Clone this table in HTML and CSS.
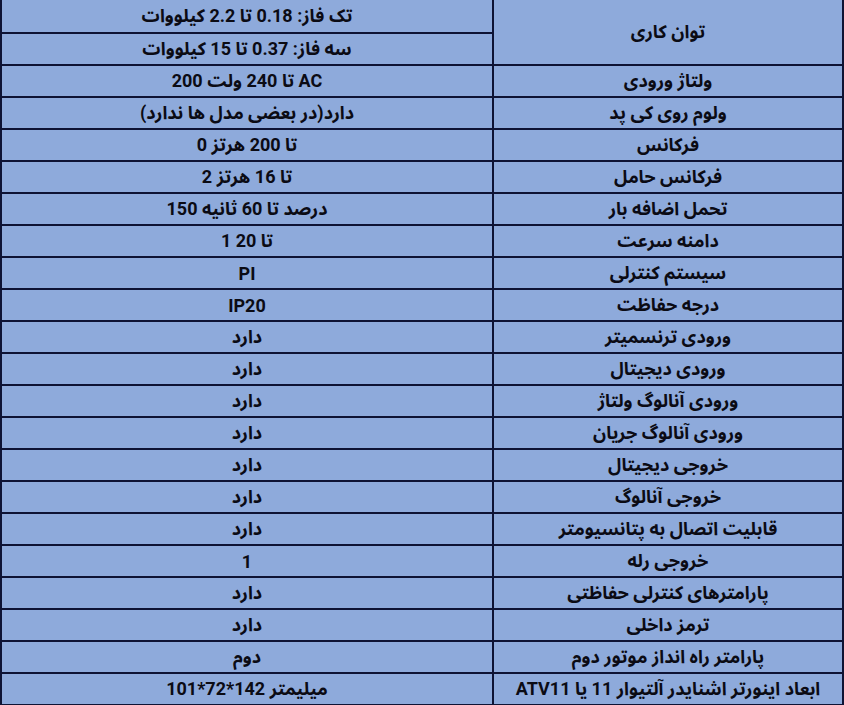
FILE: index.html
```html
<!DOCTYPE html>
<html lang="fa">
<head>
<meta charset="utf-8">
<title>مشخصات فنی اینورتر اشنایدر ATV11</title>
<link rel="stylesheet" href="styles.css">
</head>
<body>
<div class="spec">
  <div class="cell label span2">توان کاری</div>
  <div class="cell value">تک فاز: 0.18 تا 2.2 کیلووات</div>
  <div class="cell value">سه فاز: 0.37 تا 15 کیلووات</div>

  <div class="cell label">ولتاژ ورودی</div>
  <div class="cell value">200 تا 240 ولت AC</div>

  <div class="cell label">ولوم روی کی پد</div>
  <div class="cell value">دارد(در بعضی مدل ها ندارد)</div>

  <div class="cell label">فرکانس</div>
  <div class="cell value">0 تا 200 هرتز</div>

  <div class="cell label">فرکانس حامل</div>
  <div class="cell value">2 تا 16 هرتز</div>

  <div class="cell label">تحمل اضافه بار</div>
  <div class="cell value">150 درصد تا 60 ثانیه</div>

  <div class="cell label">دامنه سرعت</div>
  <div class="cell value">1 تا 20</div>

  <div class="cell label">سیستم کنترلی</div>
  <div class="cell value">PI</div>

  <div class="cell label">درجه حفاظت</div>
  <div class="cell value">IP20</div>

  <div class="cell label">ورودی ترنسمیتر</div>
  <div class="cell value">دارد</div>

  <div class="cell label">ورودی دیجیتال</div>
  <div class="cell value">دارد</div>

  <div class="cell label">ورودی آنالوگ ولتاژ</div>
  <div class="cell value">دارد</div>

  <div class="cell label">ورودی آنالوگ جریان</div>
  <div class="cell value">دارد</div>

  <div class="cell label">خروجی دیجیتال</div>
  <div class="cell value">دارد</div>

  <div class="cell label">خروجی آنالوگ</div>
  <div class="cell value">دارد</div>

  <div class="cell label">قابلیت اتصال به پتانسیومتر</div>
  <div class="cell value">دارد</div>

  <div class="cell label">خروجی رله</div>
  <div class="cell value">1</div>

  <div class="cell label">پارامترهای کنترلی حفاظتی</div>
  <div class="cell value">دارد</div>

  <div class="cell label">ترمز داخلی</div>
  <div class="cell value">دارد</div>

  <div class="cell label">پارامتر راه انداز موتور دوم</div>
  <div class="cell value">دوم</div>

  <div class="cell label">ابعاد اینورتر اشنایدر آلتیوار 11 یا ATV11</div>
  <div class="cell value">101*72*142 میلیمتر</div>
</div>
</body>
</html>
```
FILE: styles.css
```css
html {
  background: #8eaadb;
}

body {
  margin: 0;
  font-family: Roboto, "Noto Sans Arabic", "Noto Naskh Arabic", "Noto Kufi Arabic", "DejaVu Sans", sans-serif;
  color: #0b0b14;
}

.spec {
  display: grid;
  direction: rtl;
  width: 844px;
  box-sizing: border-box;
  grid-template-columns: 348px 490px;
  grid-template-rows: 32px repeat(21, 30px);
  gap: 2px;
  padding: 0 2px 2px;
  background: #0e1334;
}

.cell {
  display: flex;
  align-items: center;
  justify-content: center;
  background: #8eaadb;
  font-size: 18px;
  font-weight: 700;
  white-space: nowrap;
}

.label {
  direction: rtl;
}

.value {
  direction: ltr;
}

.span2 {
  grid-row: span 2;
}
```
